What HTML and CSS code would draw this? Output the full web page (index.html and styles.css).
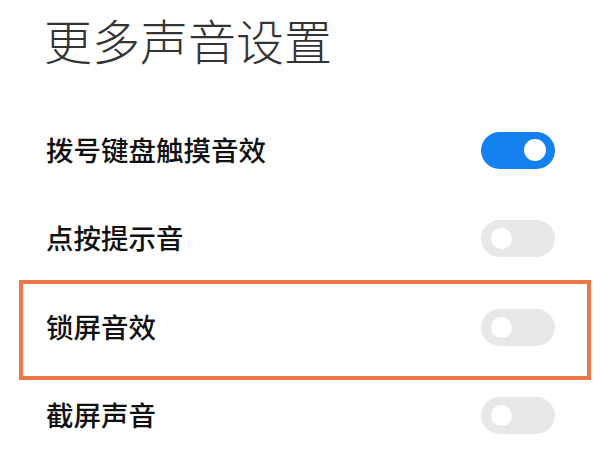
FILE: index.html
```html
<!DOCTYPE html>
<html lang="zh-CN">
<head>
    <meta charset="UTF-8">
    <meta name="viewport" content="width=device-width, initial-scale=1.0">
    <title>更多声音设置</title>
    <link rel="stylesheet" href="styles.css">
</head>
<body>
    <div class="page">
        <h1 class="title">更多声音设置</h1>

        <div class="settings">
            <div class="row">
                <span class="label">拨号键盘触摸音效</span>
                <span class="switch on"><span class="knob"></span></span>
            </div>
            <div class="row">
                <span class="label">点按提示音</span>
                <span class="switch"><span class="knob"></span></span>
            </div>
            <div class="row marked">
                <span class="label">锁屏音效</span>
                <span class="switch"><span class="knob"></span></span>
            </div>
            <div class="row">
                <span class="label">截屏声音</span>
                <span class="switch"><span class="knob"></span></span>
            </div>
        </div>
    </div>
</body>
</html>
```

FILE: styles.css
```css
* {
    margin: 0;
    padding: 0;
    box-sizing: border-box;
}

body {
    background: #fff;
    font-family: "Noto Sans CJK SC", "Noto Sans", sans-serif;
    color: #111;
    overflow: hidden;
}

.page {
    width: 600px;
}

.title {
    font-size: 48px;
    font-weight: 300;
    line-height: 56px;
    color: #333;
    padding: 11px 0 39px 44px;
}

.row {
    position: relative;
    height: 88px;
    display: flex;
    align-items: center;
    justify-content: space-between;
    padding: 0 45px 0 46px;
}

.row.marked {
    margin-top: 1px;
}

/* highlight frame drawn over the row */
.row.marked::after {
    content: "";
    position: absolute;
    left: 19px;
    right: 9px;
    top: -3px;
    bottom: -9px;
    border: 4px solid #ee7743;
}

.label {
    font-size: 27.5px;
    font-weight: 500;
    line-height: 1;
}

.switch {
    width: 74px;
    height: 37px;
    border-radius: 19px;
    background: #e8e8e8;
    display: flex;
    align-items: center;
    padding: 0 10px;
}

.switch.on {
    background: #1580f0;
    justify-content: flex-end;
    padding: 0 9px;
}

.knob {
    width: 21px;
    height: 21px;
    border-radius: 50%;
    background: #fff;
}

.switch.on .knob {
    width: 22px;
    height: 22px;
}
```
